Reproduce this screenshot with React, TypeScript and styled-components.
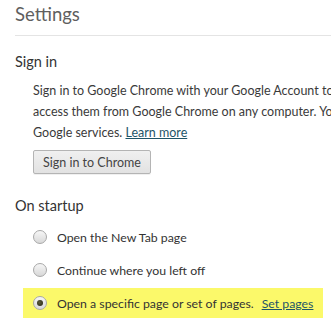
import styled, { createGlobalStyle } from "styled-components";

const GlobalStyle = createGlobalStyle`
  html, body {
    margin: 0;
    padding: 0;
    background: #fff;
    overflow: hidden;
  }
  body {
    font-family: Lato, "Open Sans", sans-serif;
    color: #303030;
  }
`;

const Page = styled.div`
  width: 331px;
  height: 330px;
  padding-left: 15px;
  box-sizing: border-box;
  overflow: hidden;
`;

const Header = styled.h1`
  margin: 0;
  padding-top: 2px;
  height: 33px;
  font-size: 18.5px;
  font-weight: 400;
  color: #5f5f5f;
  line-height: 24px;
  border-bottom: 1px solid #e4e4e4;
  white-space: nowrap;
`;

const Section = styled.section<{ $gap: number }>`
  margin-top: ${(p) => p.$gap}px;
`;

const SectionTitle = styled.h3`
  margin: 0;
  font-size: 14.5px;
  font-weight: 400;
  color: #333;
  line-height: 20px;
`;

const SectionBody = styled.div`
  padding-left: 18px;
  margin-top: 8px;
`;

const Text = styled.p`
  margin: 0;
  white-space: nowrap;
  font-size: 12.5px;
  line-height: 21px;
  color: #3a3a3a;
`;

const Link = styled.a<{ $offset?: number }>`
  margin-left: ${(p) => p.$offset ?? 0}px;
  color: #1e5568;
  text-decoration: underline;
  cursor: pointer;
`;

const Button = styled.button`
  display: block;
  margin-top: 7px;
  width: 118px;
  height: 24px;
  padding: 0;
  font-family: inherit;
  font-size: 12.5px;
  color: #444;
  border: 1px solid #b4b4b4;
  border-radius: 2px;
  background: linear-gradient(#f0f0f0, #e2e2e2);
  box-shadow: 0 1px 0 rgba(0, 0, 0, 0.06);
`;

const Options = styled.div`
  margin-top: 6px;
  display: flex;
  flex-direction: column;
  gap: 3px;
`;

const Option = styled.label<{ $highlight?: boolean }>`
  display: flex;
  align-items: center;
  gap: 10px;
  height: 30px;
  margin-left: 8px;
  padding-left: 10px;
  width: 300px;
  box-sizing: border-box;
  white-space: nowrap;
  font-size: 12.3px;
  color: #333;
  background: ${(p) => (p.$highlight ? "#fbf96a" : "transparent")};
`;

const Radio = styled.span<{ $checked?: boolean }>`
  width: 12px;
  height: 12px;
  border-radius: 50%;
  border: 1px solid #a8a8a8;
  background: linear-gradient(#f6f6f6, #d8d8d8);
  display: flex;
  align-items: center;
  justify-content: center;
  flex-shrink: 0;

  &::after {
    content: "";
    display: ${(p) => (p.$checked ? "block" : "none")};
    width: 6px;
    height: 6px;
    border-radius: 50%;
    background: radial-gradient(circle at 40% 40%, #5a5a3a, #262616);
  }
`;

export default function App() {
  return (
    <>
      <GlobalStyle />
      <Page>
        <Header>Settings</Header>
        <Section $gap={16}>
          <SectionTitle>Sign in</SectionTitle>
          <SectionBody>
            <Text>
              Sign in to Google Chrome with your Google Account to save your
              personalized browser features to the web and
              <br />
              access them from Google Chrome on any computer. You'll also be
              automatically signed in to your favorite
              <br />
              Google services. <Link>Learn more</Link>
            </Text>
            <Button>Sign in to Chrome</Button>
          </SectionBody>
        </Section>
        <Section $gap={22}>
          <SectionTitle>On startup</SectionTitle>
          <Options>
            <Option>
              <Radio />
              <span>Open the New Tab page</span>
            </Option>
            <Option>
              <Radio />
              <span>Continue where you left off</span>
            </Option>
            <Option $highlight>
              <Radio $checked />
              <span>
                Open a specific page or set of pages.
                <Link $offset={8}>Set pages</Link>
              </span>
            </Option>
          </Options>
        </Section>
      </Page>
    </>
  );
}
